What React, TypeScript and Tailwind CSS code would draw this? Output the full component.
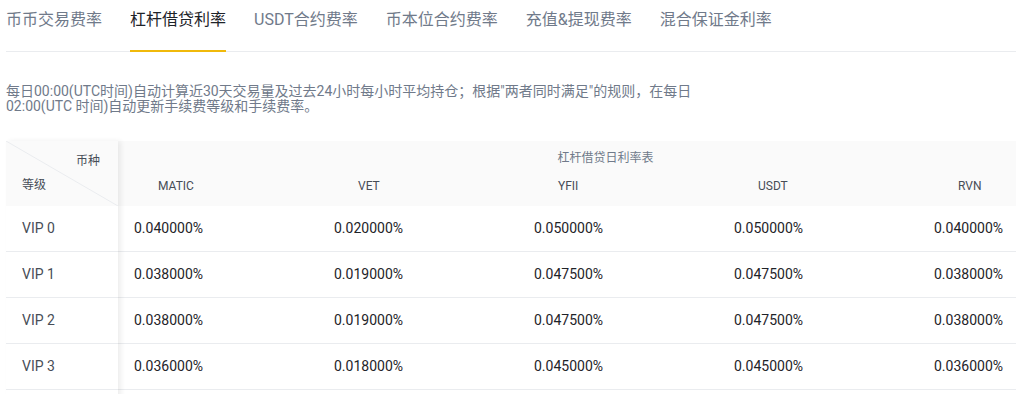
const tabs = ["币币交易费率", "杠杆借贷利率", "USDT合约费率", "币本位合约费率", "充值&提现费率", "混合保证金利率"];

const coins = ["MATIC", "VET", "YFII", "USDT", "RVN"];

const rows = [
  { level: "VIP 0", rates: ["0.040000%", "0.020000%", "0.050000%", "0.050000%", "0.040000%"] },
  { level: "VIP 1", rates: ["0.038000%", "0.019000%", "0.047500%", "0.047500%", "0.038000%"] },
  { level: "VIP 2", rates: ["0.038000%", "0.019000%", "0.047500%", "0.047500%", "0.038000%"] },
  { level: "VIP 3", rates: ["0.036000%", "0.018000%", "0.045000%", "0.045000%", "0.036000%"] },
];

const colW = ["w-[200px]", "w-[200px]", "w-[200px]", "w-[200px]", "w-[175px]"];

export default function App() {
  return (
    <div className="bg-white min-h-[394px] pl-[6px] font-['Roboto','Noto_Sans_CJK_SC',sans-serif] overflow-hidden">
      {/* tabs */}
      <div className="flex gap-7 border-b border-[#eaecef]">
        {tabs.map((t, i) => (
          <div
            key={t}
            className={`-mb-px pt-2 pb-[18px] text-[16px] leading-6 border-b-2 whitespace-nowrap ${
              i === 1 ? "border-[#f0b90b] text-[#1e2329]" : "border-transparent text-[#707a8a]"
            }`}
          >
            {t}
          </div>
        ))}
      </div>

      <p className="mt-8 text-[14px] leading-[15px] text-[#707a8a]">
        每日00:00(UTC时间)自动计算近30天交易量及过去24小时每小时平均持仓；根据"两者同时满足"的规则，在每日
        <br />
        02:00(UTC 时间)自动更新手续费等级和手续费率。
      </p>

      <div className="mt-[27px] flex w-[1087px]">
        {/* fixed level column */}
        <div className="w-[112px] shrink-0 relative z-10 bg-white shadow-[3px_0_5px_rgba(0,0,0,0.07)]">
          <div className="h-[65px] bg-[#fafafa] relative text-[12px] text-[#474d57]">
            <svg className="absolute inset-0 w-full h-full" preserveAspectRatio="none" viewBox="0 0 112 65">
              <line x1="0" y1="0" x2="112" y2="65" stroke="#eaecef" strokeWidth="1" />
            </svg>
            <span className="absolute right-[18px] top-[12px] leading-4">币种</span>
            <span className="absolute left-4 top-[36px] leading-4">等级</span>
          </div>
          {rows.map((r) => (
            <div key={r.level} className="h-[46px] border-b border-[#eaecef] flex items-center pl-4 text-[14px] text-[#474d57]">
              {r.level}
            </div>
          ))}
          <div className="h-[10px]" />
        </div>

        {/* rates */}
        <div className="flex-1">
          <div className="h-[65px] bg-[#fafafa] flex flex-col">
            <div className="h-[34px] flex items-center justify-center text-[12px] text-[#707a8a]">杠杆借贷日利率表</div>
            <div className="h-[22px] flex items-center text-[12px] text-[#474d57]">
              {coins.map((c, i) => (
                <div key={c} className={`${colW[i]} pl-10`}>
                  {c}
                </div>
              ))}
            </div>
          </div>
          {rows.map((r) => (
            <div key={r.level} className="h-[46px] border-b border-[#eaecef] flex items-center text-[14px] text-[#1e2329]">
              {r.rates.map((v, i) => (
                <div key={i} className={`${colW[i]} pl-4`}>
                  {v}
                </div>
              ))}
            </div>
          ))}
        </div>
      </div>
    </div>
  );
}
